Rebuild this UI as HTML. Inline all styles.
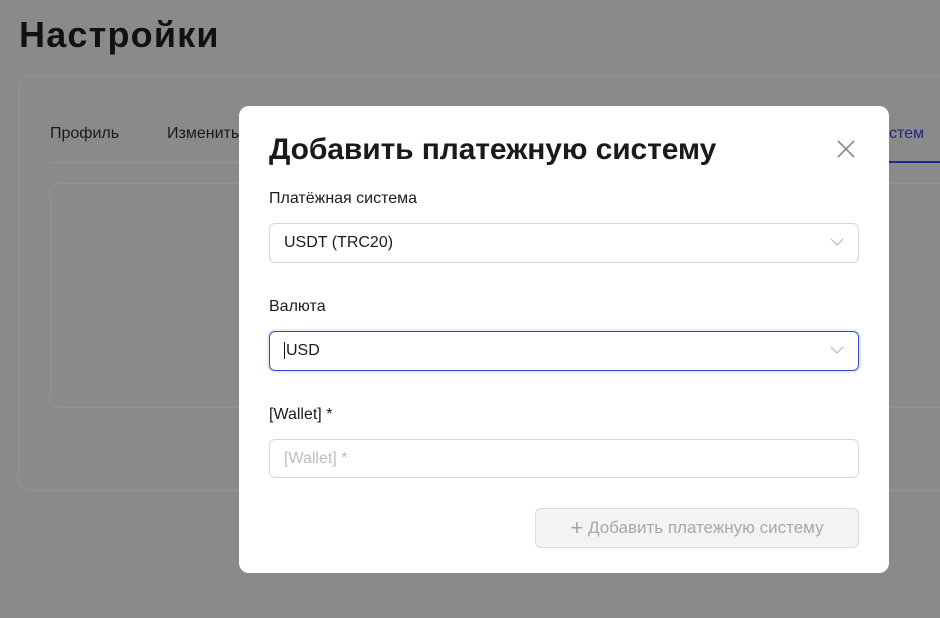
<!DOCTYPE html>
<html><head><meta charset="utf-8"><style>
*{box-sizing:border-box;margin:0;padding:0}
body{width:940px;height:618px;overflow:hidden;background:#8a8a8a;font-family:"Liberation Sans","DejaVu Sans",sans-serif;position:relative;color:#1b1b1b}
.h1{position:absolute;left:19px;top:14px;font-size:36px;font-weight:bold;color:#111;letter-spacing:1.2px}
.card{position:absolute;left:18px;top:75px;width:940px;height:416px;border:1px solid #939393;border-radius:12px;background:#8a8a8a}
.tab{position:absolute;top:125px;font-size:16px;color:#1a1a1a}
.line{position:absolute;left:50px;top:162px;width:900px;height:1px;background:#949494}
.inner{position:absolute;left:50px;top:183px;width:900px;height:225px;border:1px solid #939393;border-radius:10px}
.modal{position:absolute;left:239px;top:106px;width:650px;height:467px;background:#fff;border-radius:10px}
.t{position:absolute;left:30px;top:27px;font-size:30px;font-weight:bold;color:#1a1a1a;letter-spacing:-0.1px}
.x{position:absolute;left:598px;top:34px}
.lab{position:absolute;left:30px;font-size:16px;color:#1b1b1b}
.in{position:absolute;left:30px;width:590px;height:40px;border:1px solid #d9d9d9;border-radius:6px;font-size:16px;padding:0 14px;line-height:38px;color:#1b1b1b}
.chev{position:absolute;right:14px;top:13px}
.btn{position:absolute;left:296px;top:402px;width:324px;height:40px;border:1px solid #dcdcdc;border-radius:6px;background:#f3f3f3;color:#a8a8a8;font-size:17px;line-height:38px;text-align:center}
</style></head><body>
<div class="h1">Настройки</div>
<div class="card"></div>
<div class="tab" style="left:50px">Профиль</div>
<div class="tab" style="left:167px">Изменить</div>
<div class="tab" style="left:872px;color:#1e2a7a">систем</div>
<div class="line"></div>
<div style="position:absolute;left:870px;top:161px;width:70px;height:2px;background:#1e2a8a"></div>
<div class="inner"></div>
<div class="modal">
<div class="t">Добавить платежную систему</div>
<svg class="x" width="18" height="18" viewBox="0 0 18 18"><path d="M1 1L17 17M17 1L1 17" stroke="#8a8a8a" stroke-width="1.6"/></svg>
<div class="lab" style="top:84px">Платёжная система</div>
<div class="in" style="top:117px">USDT (TRC20)<svg class="chev" width="14" height="10" viewBox="0 0 14 10"><path d="M1 2l6 6 6-6" fill="none" stroke="#b5b5b5" stroke-width="1.2"/></svg></div>
<div class="lab" style="top:192px">Валюта</div>
<div class="in" style="top:225px;border-color:#2f48d0;box-shadow:0 0 0 2px rgba(47,72,208,0.1)"><span style="border-left:1px solid #111;padding-left:1px">USD</span><svg class="chev" width="14" height="10" viewBox="0 0 14 10"><path d="M1 2l6 6 6-6" fill="none" stroke="#b5b5b5" stroke-width="1.2"/></svg></div>
<div class="lab" style="top:300px">[Wallet] *</div>
<div class="in" style="top:333px;height:39px;color:#bdbdbd">[Wallet] *</div>
<div class="btn"><span style="font-size:22px;vertical-align:-2px">+</span> Добавить платежную систему</div>
</div>
</body></html>
